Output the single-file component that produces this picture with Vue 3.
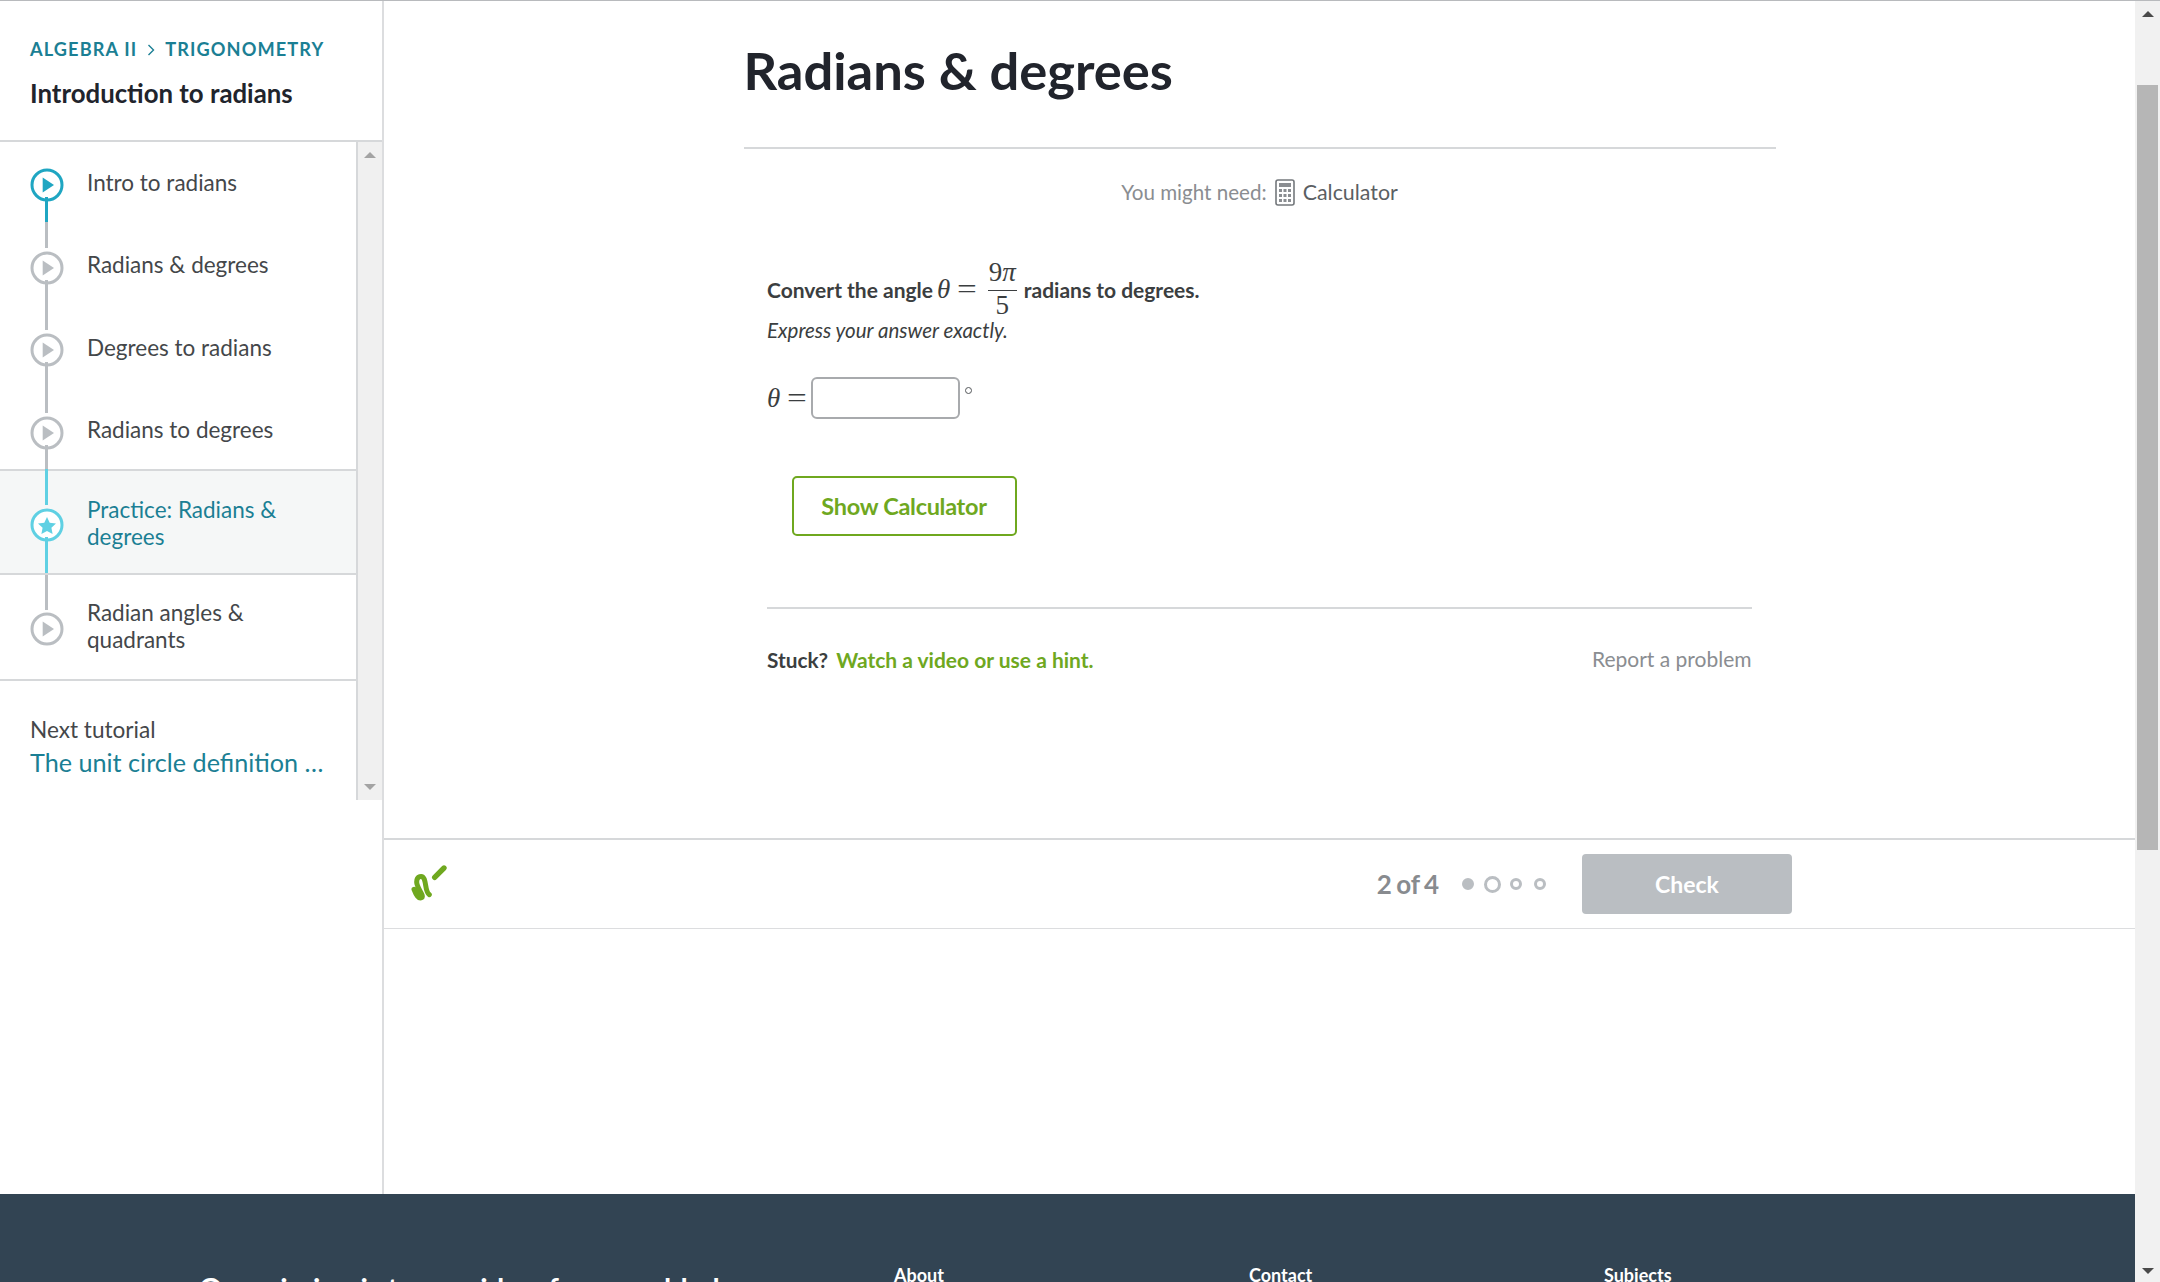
<script setup>
const lessons = [
  { title: ['Intro to radians'], state: 'first', kind: 'play' },
  { title: ['Radians & degrees'], state: '', kind: 'play' },
  { title: ['Degrees to radians'], state: '', kind: 'play' },
  { title: ['Radians to degrees'], state: 'before', kind: 'play' },
  { title: ['Practice: Radians &', 'degrees'], state: 'active', kind: 'star' },
  { title: ['Radian angles &', 'quadrants'], state: 'last', kind: 'play' },
]
const dots = ['done', 'current', 'todo', 'todo']
const footerCols = ['About', 'Contact', 'Subjects']
</script>

<template>
  <div class="page">
    <div class="scroller">
      <div class="layout">
        <aside class="sidebar">
          <header class="side-head">
            <div class="crumbs">
              <span>ALGEBRA II</span>
              <svg class="chev" viewBox="0 0 8 12" width="8" height="12"><path d="M1.5 1 L6.5 6 L1.5 11" fill="none" stroke="#1b7f94" stroke-width="1.4"/></svg>
              <span>TRIGONOMETRY</span>
            </div>
            <h2 class="unit">Introduction to radians</h2>
          </header>
          <div class="side-scroll">
            <div class="side-list">
              <div v-for="(l, i) in lessons" :key="i" class="row" :class="l.state">
                <div class="rail">
                  <svg class="node" viewBox="0 0 34 34" width="34" height="34">
                    <circle cx="17" cy="17" r="15" fill="#fff" class="ring" stroke-width="3"/>
                    <path v-if="l.kind === 'play'" d="M12.7 9.5 L24 17 L12.7 24.5 Z" class="glyph"/>
                    <path v-else d="M17 9 L19.7 14.8 L26 15.6 L21.4 19.8 L22.6 26 L17 23 L11.4 26 L12.6 19.8 L8 15.6 L14.3 14.8 Z" class="glyph"/>
                  </svg>
                  <span class="seg seg-top"></span>
                  <span class="seg seg-bottom"></span>
                </div>
                <div class="row-title">
                  <div v-for="t in l.title" :key="t">{{ t }}</div>
                </div>
              </div>
              <div class="next">
                <div class="next-label">Next tutorial</div>
                <div class="next-link">The unit circle definition …</div>
              </div>
            </div>
            <div class="mini-bar">
              <span class="tri up small"></span>
              <span class="tri down small"></span>
            </div>
          </div>
        </aside>

        <main class="main">
          <section class="task">
            <div class="task-inner">
              <h1 class="title">Radians &amp; degrees</h1>
              <div class="need">
                <span>You might need:</span>
                <svg class="calc" viewBox="0 0 20 27" width="20" height="27">
                  <rect x="1" y="1" width="18" height="25" rx="2" fill="none" stroke="#74787c" stroke-width="1.6"/>
                  <rect x="4" y="4" width="12" height="4" fill="#8a8d91"/>
                  <g fill="#8a8d91">
                    <rect x="4" y="10" width="3" height="3"/><rect x="8.5" y="10" width="3" height="3"/><rect x="13" y="10" width="3" height="3"/>
                    <rect x="4" y="15" width="3" height="3"/><rect x="8.5" y="15" width="3" height="3"/><rect x="13" y="15" width="3" height="3"/>
                    <rect x="4" y="20" width="3" height="3"/><rect x="8.5" y="20" width="3" height="3"/><rect x="13" y="20" width="3" height="3"/>
                  </g>
                </svg>
                <span class="need-tool">Calculator</span>
              </div>
              <div class="problem">
                <div class="question">
                  <span>Convert the angle</span>
                  <span class="math q-math"><i>θ</i><span class="eq">=</span></span>
                  <span class="frac"><span class="num">9<i>π</i></span><span class="den">5</span></span>
                  <span class="q-tail">radians to degrees.</span>
                </div>
                <div class="express">Express your answer exactly.</div>
                <div class="answer">
                  <span class="math"><i>θ</i><span class="eq">=</span></span>
                  <input class="box" type="text" aria-label="answer" />
                  <span class="deg"></span>
                </div>
                <button class="show-calc">Show Calculator</button>
                <div class="rule"></div>
                <div class="stuck">
                  <span class="stuck-q">Stuck?</span>
                  <span class="stuck-link">Watch a video or use a hint.</span>
                  <span class="report">Report a problem</span>
                </div>
              </div>
            </div>
          </section>
          <section class="bar">
            <div class="bar-inner">
              <svg class="scratch" viewBox="90 100 120 120" width="40" height="40">
                <path d="M102 182 C108 198 116 212 125 207 C134 201 110 178 110 160 C110 142 127 138 133 152 C139 168 136 190 148 198" fill="none" stroke="#6fa81f" stroke-width="15" stroke-linecap="round" stroke-linejoin="round"/>
                <path d="M164 146 L192 118" fill="none" stroke="#6fa81f" stroke-width="16" stroke-linecap="round"/>
              </svg>
              <div class="progress">
                <span class="count">2 of 4</span>
                <span class="dots">
                  <span v-for="(d, i) in dots" :key="i" class="dot" :class="d"></span>
                </span>
                <button class="check">Check</button>
              </div>
            </div>
          </section>
        </main>
      </div>
      <footer class="footer">
        <div class="mission">Our mission is to provide a free, world-class education for anyone, anywhere.</div>
        <div class="cols">
          <div v-for="c in footerCols" :key="c" class="col">{{ c }}</div>
        </div>
      </footer>
    </div>
    <div class="page-bar">
      <span class="tri up"></span>
      <div class="thumb"></div>
      <span class="tri down"></span>
    </div>
  </div>
</template>

<style>
html, body { margin: 0; overflow: hidden; background: #fff; }
</style>

<style scoped>
.page {
  width: 2160px;
  height: 1282px;
  display: flex;
  overflow: hidden;
  border-top: 1px solid #b8babd;
  box-sizing: border-box;
  font-family: Lato, "Open Sans", sans-serif;
  color: #3b3e40;
  background: #fff;
}
.scroller { flex: 1; min-width: 0; overflow: hidden; }
.layout { display: flex; height: 1193px; }

.sidebar {
  width: 384px;
  flex: none;
  box-sizing: border-box;
  border-right: 2px solid #dcdddf;
}
.side-head {
  height: 141px;
  box-sizing: border-box;
  padding: 37px 0 0 30px;
  border-bottom: 2px solid #d6d8da;
}
.crumbs {
  display: flex;
  align-items: center;
  gap: 10px;
  font-size: 18.2px;
  line-height: 22px;
  font-weight: 700;
  letter-spacing: 1.1px;
  color: #1b7f94;
}
.chev { margin-top: 1px; }
.unit {
  margin: 17px 0 0;
  font-size: 25.8px;
  line-height: 32px;
  font-weight: 700;
  color: #21242c;
}
.side-scroll { display: flex; height: 658px; }
.side-list { flex: 1; min-width: 0; }
.row {
  position: relative;
  height: 82.5px;
  box-sizing: border-box;
  display: flex;
  padding-left: 29.5px;
}
.row.before { height: 79.5px; }
.row.active {
  height: 106px;
  background: #f5f7f7;
  border-top: 2px solid #d6d8da;
  border-bottom: 2px solid #d6d8da;
  color: #1b7f94;
  align-items: center;
}
.row.last {
  height: 106px;
  align-items: center;
  border-bottom: 2px solid #d6d8da;
}
.rail { position: relative; width: 34px; flex: none; align-self: stretch; }
.node { position: absolute; left: 0; top: 26px; }
.row.active .node, .row.last .node { top: 37px; }
.ring { stroke: #babec2; }
.glyph { fill: #babec2; }
.row.first .ring { stroke: #1fa6c2; }
.row.first .glyph { fill: #1fa6c2; }
.row.active .ring { stroke: #5fd0e3; }
.row.active .glyph { fill: #5fd0e3; }
.seg { position: absolute; left: 15.5px; width: 3px; background: #babec2; }
.seg-top { top: 0; height: 23px; }
.seg-bottom { top: 55px; bottom: 0; }
.row.first .seg-top { display: none; }
.row.first .seg-bottom { background: linear-gradient(#1fa6c2 0, #1fa6c2 25px, #babec2 25px); }
.row.active .seg-top { top: -2px; height: 36px; background: #5fd0e3; }
.row.active .seg-bottom { top: 66px; bottom: 0; background: #5fd0e3; }
.row.last .seg-top { height: 35px; }
.row.last .seg-bottom { display: none; }
.row-title {
  margin-left: 23.5px;
  padding-top: 26.5px;
  font-size: 22.5px;
  line-height: 27px;
  color: #44474a;
}
.row.active .row-title { padding-top: 2px; color: #1b7f94; }
.row.last .row-title { padding-top: 0; margin-top: -2px; }
.next { padding: 34px 0 0 30px; }
.next-label { font-size: 22.6px; line-height: 29px; color: #44474a; }
.next-link { font-size: 25.2px; line-height: 36px; color: #1b7f94; white-space: nowrap; }
.mini-bar {
  width: 26px;
  flex: none;
  background: #f0f0f0;
  border-left: 2px solid #d6d8da;
  display: flex;
  flex-direction: column;
  justify-content: space-between;
  align-items: center;
  padding: 10px 0 10px;
  box-sizing: border-box;
}

.main { flex: 1; min-width: 0; }
.task { height: 839px; box-sizing: border-box; border-bottom: 2px solid #d6d8da; }
.task-inner { width: 1032px; margin: 0 auto; }
.title {
  margin: 0;
  height: 148px;
  box-sizing: border-box;
  padding-top: 35px;
  border-bottom: 2px solid #d6d8da;
  font-size: 52.5px;
  line-height: 68px;
  font-weight: 700;
  color: #21242c;
}
.need {
  display: flex;
  justify-content: center;
  align-items: center;
  gap: 8px;
  margin-top: 29.5px;
  height: 27px;
  font-size: 20.6px;
  color: #8a8d91;
}
.need-tool { color: #5b5f63; font-size: 21.4px; }
.problem { padding: 0 24px 0 23.5px; }
.question {
  display: flex;
  align-items: center;
  margin-top: 53.5px;
  height: 60px;
  font-size: 21px;
  font-weight: 700;
  color: #3b3e40;
}
.q-math { margin-left: 4px; gap: 5px; }
.q-tail { margin-left: 7px; }
.math {
  font-family: "Liberation Serif", serif;
  font-weight: 400;
  font-size: 27px;
  color: #3b3e40;
  display: inline-flex;
  gap: 6.5px;
}
.eq { display: inline-block; width: 20px; text-align: center; transform: scaleX(1.3); }
.frac {
  display: inline-flex;
  flex-direction: column;
  align-items: stretch;
  font-family: "Liberation Serif", serif;
  font-weight: 400;
  font-size: 27px;
  text-align: center;
  margin-left: 11px;
  width: 29px;
}
.num { border-bottom: 1.5px solid #3b3e40; line-height: 25px; padding-bottom: 5px; }
.den { line-height: 28px; }
.express { font-size: 20.5px; font-style: italic; line-height: 28px; margin-top: -3px; }
.answer {
  display: flex;
  align-items: center;
  margin-top: 33px;
  height: 42px;
}
.box {
  width: 149px;
  height: 42px;
  box-sizing: border-box;
  border: 2px solid #a8aaad;
  border-radius: 6px;
  background: #fff;
  margin-left: 4px;
  padding: 0;
}
.deg {
  width: 7px;
  height: 7px;
  box-sizing: border-box;
  border: 1px solid #55585b;
  border-radius: 50%;
  margin: -16px 0 0 5px;
}
.show-calc {
  display: block;
  width: 225px;
  height: 60px;
  margin: 57px 0 0 24.5px;
  box-sizing: border-box;
  border: 2px solid #6fa81f;
  border-radius: 5px;
  background: #fff;
  color: #6fa81f;
  font-family: inherit;
  font-size: 23.5px;
  font-weight: 700;
  letter-spacing: -0.3px;
  padding: 0;
}
.rule { border-top: 2px solid #d6d8da; margin-top: 71px; }
.stuck {
  display: flex;
  align-items: center;
  margin-top: 35px;
  height: 30px;
  font-size: 20.8px;
  font-weight: 700;
}
.stuck-link { color: #6fa81f; margin-left: 8px; font-size: 21px; }
.report { margin-left: auto; font-weight: 400; color: #8a8d91; font-size: 21px; margin-top: -2px; }

.bar { height: 89px; box-sizing: border-box; border-bottom: 1px solid #dcdddf; }
.bar-inner {
  display: flex;
  align-items: center;
  justify-content: space-between;
  height: 88px;
  padding: 0 343px 0 26px;
}
.scratch { margin-top: -4px; }
.progress { display: flex; align-items: center; }
.count { font-size: 26px; font-weight: 700; color: #888b8f; word-spacing: -2px; }
.dots { display: flex; align-items: center; margin-left: 23px; gap: 9.5px; }
.dot {
  box-sizing: border-box;
  width: 12px;
  height: 12px;
  border-radius: 50%;
  border: 3px solid #babec2;
}
.dot.done { background: #babec2; }
.dot.current { width: 17px; height: 17px; }
.dot:last-child { margin-left: 2.5px; }
.check {
  width: 210px;
  height: 60px;
  margin-left: 36px;
  border: 0;
  border-radius: 4px;
  background: #babec2;
  color: #fff;
  font-family: inherit;
  font-size: 23px;
  font-weight: 700;
  padding: 0;
}

.footer {
  height: 120px;
  background: #324453;
  color: #fff;
  display: flex;
  padding: 70px 0 0 199px;
  box-sizing: border-box;
  font-weight: 700;
}
.mission { width: 695px; flex: none; font-size: 29px; line-height: 40px; margin-top: 4px; padding-right: 60px; box-sizing: border-box; }
.cols { display: flex; }
.col { width: 355px; font-size: 18px; line-height: 22px; }

.page-bar {
  width: 25px;
  flex: none;
  background: #f1f1f1;
  position: relative;
  display: flex;
  flex-direction: column;
  align-items: center;
  justify-content: space-between;
  padding: 10px 0 8px;
  box-sizing: border-box;
}
.thumb {
  position: absolute;
  left: 2px;
  right: 2px;
  top: 84px;
  height: 765px;
  background: #b6b6b6;
}
.tri { width: 0; height: 0; border-left: 6px solid transparent; border-right: 6px solid transparent; }
.tri.up { border-bottom: 6px solid #4a4a4a; }
.tri.down { border-top: 6px solid #4a4a4a; }
.tri.small.up { border-bottom-color: #a3a3a3; }
.tri.small.down { border-top-color: #a3a3a3; }
</style>
